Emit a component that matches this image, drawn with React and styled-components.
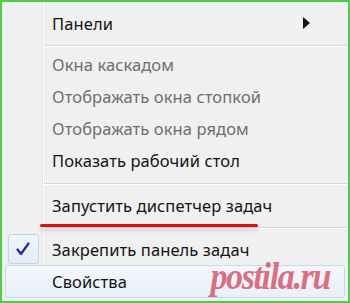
import styled, { createGlobalStyle } from 'styled-components';

const GlobalStyle = createGlobalStyle`
  html, body {
    margin: 0;
    padding: 0;
    background: #ffffff;
  }
  * {
    box-sizing: border-box;
  }
`;

const Frame = styled.div`
  position: relative;
  width: 350px;
  height: 303px;
  border: 2px solid #4ccf45;
  background: #f0f0f0;
  font-family: "Noto Sans", "Open Sans", sans-serif;
  font-size: 16.5px;
  overflow: hidden;
`;

const Menu = styled.div`
  display: flex;
  flex-direction: column;
  height: 100%;
  background:
    linear-gradient(to right, transparent 40px, #e2e3e3 40px, #e2e3e3 41px, #ffffff 41px, #ffffff 42px, transparent 42px);
`;

const Item = styled.div`
  position: relative;
  display: flex;
  align-items: center;
  height: ${p => p.$h || 32}px;
  color: ${p => (p.$disabled ? '#6e6e6e' : '#141414')};
  ${p => p.$active && `
    margin: 0 3px;
    border: 1px solid #c6d9ef;
    border-radius: 3px;
    background: linear-gradient(to bottom, #f4f7fc, #eaf0f9);
  `}
`;

const Gutter = styled.div`
  display: flex;
  align-items: center;
  justify-content: center;
  width: ${p => (p.$active ? 36 : 40)}px;
  flex-shrink: 0;
  align-self: stretch;
`;

const Label = styled.div`
  position: relative;
  flex: 1;
  padding-left: 10px;
  white-space: nowrap;
  letter-spacing: 0.1px;
`;

const Arrow = styled.div`
  width: 0;
  height: 0;
  margin-right: 38px;
  border-top: 6px solid transparent;
  border-bottom: 6px solid transparent;
  border-left: 7px solid #111;
`;

const Separator = styled.div`
  margin: ${p => p.$m || '0'};
  margin-left: 42px;
  height: 2px;
  border-top: 1px solid #d8d8d8;
  border-bottom: 1px solid #ffffff;
`;

const CheckBox = styled.div`
  display: flex;
  align-items: center;
  justify-content: center;
  width: 31px;
  height: 30px;
  margin-left: 2px;
  border: 1px solid #c3d5ea;
  border-radius: 3px;
  background: linear-gradient(to bottom, #f0f5fb, #e4ecf7);
`;

const Underline = styled.span`
  position: absolute;
  left: -2px;
  top: 30px;
  width: 218px;
  height: 3px;
  background: #d4121b;
  border-radius: 2px;
  box-shadow: 0 3px 4px rgba(0, 0, 0, 0.18);
`;

const Watermark = styled.div`
  position: absolute;
  right: 18px;
  bottom: 6px;
  line-height: 1;
  font-family: "Liberation Serif", serif;
  font-weight: bold;
  font-style: italic;
  font-size: 37px;
  letter-spacing: -1.5px;
  transform: scaleX(0.92);
  transform-origin: right bottom;
  color: rgba(214, 80, 104, 0.82);
  pointer-events: none;
`;

const items = [
  { label: 'Окна каскадом', disabled: true },
  { label: 'Отображать окна стопкой', disabled: true },
  { label: 'Отображать окна рядом', disabled: true },
  { label: 'Показать рабочий стол' },
];

export default function App() {
  return (
    <>
      <GlobalStyle />
      <Frame>
        <Menu>
          <Item $h={42}>
            <Gutter />
            <Label>Панели</Label>
            <Arrow />
          </Item>
          <Separator $m="1px 0 1px" />
          {items.map(it => (
            <Item key={it.label} $disabled={it.disabled}>
              <Gutter />
              <Label>{it.label}</Label>
            </Item>
          ))}
          <Separator $m="7px 0 4px" />
          <Item>
            <Gutter />
            <Label>
              Запустить диспетчер задач
              <Underline />
            </Label>
          </Item>
          <Separator $m="6px 0 4px" />
          <Item>
            <Gutter>
              <CheckBox>
                <svg width="16" height="16" viewBox="0 0 16 16">
                  <path d="M2.5 8.5 L6 13 L13.5 2.5" fill="none" stroke="#1a2aa6" strokeWidth="2.2" strokeLinecap="round" strokeLinejoin="round" />
                </svg>
              </CheckBox>
            </Gutter>
            <Label>Закрепить панель задач</Label>
          </Item>
          <Item $active $h={33}>
            <Gutter $active />
            <Label>Свойства</Label>
          </Item>
        </Menu>
        <Watermark>postila.ru</Watermark>
      </Frame>
    </>
  );
}
